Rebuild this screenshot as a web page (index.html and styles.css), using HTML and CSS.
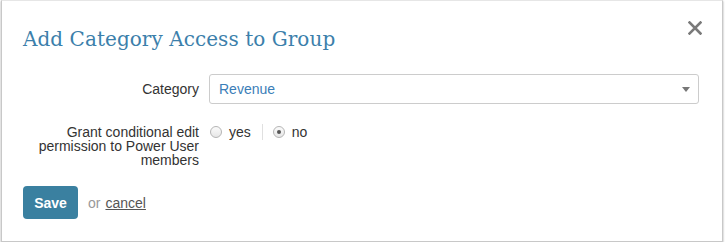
FILE: index.html
```html
<!DOCTYPE html>
<html>
<head>
<meta charset="utf-8">
<link rel="stylesheet" href="styles.css">
</head>
<body>
<div class="dialog">
  <div class="header">
    <h1 class="title">Add Category Access to Group</h1>
    <span class="close">
      <svg width="14" height="14" viewBox="0 0 14 14"><path d="M1.5 1.5 L12.5 12.5 M12.5 1.5 L1.5 12.5" stroke="#7a7a7a" stroke-width="2.6" stroke-linecap="square"/></svg>
    </span>
  </div>
  <div class="row row-select">
    <label class="label">Category</label>
    <div class="select">
      <span class="select-value">Revenue</span>
      <span class="caret"></span>
    </div>
  </div>
  <div class="row row-radio">
    <label class="label">Grant conditional edit permission to Power User members</label>
    <div class="radios">
      <span class="radio"><span class="dot"></span>yes</span>
      <span class="sep"></span>
      <span class="radio"><span class="dot checked"></span>no</span>
    </div>
  </div>
  <div class="actions">
    <button class="btn">Save</button>
    <span class="or">or</span>
    <a class="cancel">cancel</a>
  </div>
</div>
</body>
</html>
```
FILE: styles.css
```css
html, body {
  margin: 0;
  padding: 0;
  background: #fff;
}
body {
  font-family: "Liberation Sans", Arial, sans-serif;
  font-size: 14px;
  color: #333;
}
.dialog {
  box-sizing: border-box;
  width: 722px;
  height: 242px;
  margin-left: 1px;
  border: 1px solid #c8c8c8;
  border-top-color: #e6e6e6;
  box-shadow: 0 1px 2px rgba(0,0,0,0.35);
  padding: 0 21px 0 21px;
  background: #fff;
}
.header {
  display: flex;
  justify-content: space-between;
  align-items: flex-start;
  height: 73px;
}
.title {
  margin: 26px 0 0 0;
  font-family: "DejaVu Serif", "Liberation Serif", serif;
  font-weight: normal;
  font-size: 20px;
  color: #3c7fab;
  letter-spacing: 0.05px;
}
.close {
  margin-top: 20px;
  margin-right: -1px;
  line-height: 0;
}
.row {
  display: flex;
  align-items: flex-start;
}
.label {
  width: 176px;
  text-align: right;
  flex: none;
  margin-right: 10px;
}
.row-select .label {
  line-height: 30px;
}
.select {
  flex: 1;
  box-sizing: border-box;
  height: 30px;
  border: 1px solid #cccccc;
  border-radius: 3px;
  display: flex;
  align-items: center;
  justify-content: space-between;
  padding: 0 8px 0 9px;
  margin-right: 2px;
}
.select-value {
  color: #3b7eb8;
}
.caret {
  width: 0;
  height: 0;
  border-left: 4.5px solid transparent;
  border-right: 4.5px solid transparent;
  border-top: 5px solid #777;
}
.row-radio {
  margin-top: 20px;
}
.row-radio .label {
  line-height: 14px;
  padding-top: 1px;
}
.radios {
  display: flex;
  align-items: center;
  margin-left: 1px;
  height: 16px;
  margin-top: 0;
}
.radio {
  display: inline-flex;
  align-items: center;
}
.dot {
  box-sizing: border-box;
  width: 12px;
  height: 12px;
  border-radius: 50%;
  border: 1px solid #b5b5b5;
  background: linear-gradient(#fbfbfb, #e6e6e6);
  margin-right: 7px;
  position: relative;
}
.dot.checked::after {
  content: "";
  position: absolute;
  left: 3px;
  top: 3px;
  width: 4px;
  height: 4px;
  border-radius: 50%;
  background: #555;
}
.sep {
  width: 1px;
  height: 16px;
  background: #e0e0e0;
  margin: 0 10px 0 11px;
}
.actions {
  display: flex;
  align-items: center;
  margin-top: 19px;
}
.btn {
  font-family: "Liberation Sans", Arial, sans-serif;
  font-weight: bold;
  font-size: 14px;
  color: #fff;
  background: #3a80a0;
  border: none;
  border-radius: 4px;
  width: 55px;
  height: 33px;
  padding: 0;
}
.or {
  color: #999;
  margin-left: 10px;
  margin-right: 5px;
}
.cancel {
  color: #555;
  text-decoration: underline;
}
```
